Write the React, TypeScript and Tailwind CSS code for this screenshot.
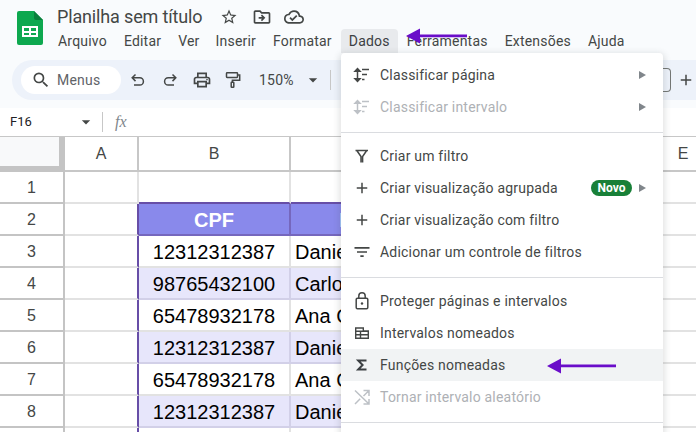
import React from "react";
import { MdStarBorder, MdOutlineDriveFileMove, MdOutlineCloudDone, MdOutlinePrint, MdSearch, MdFilterList, MdAdd, MdArrowDropDown } from "react-icons/md";

const SortIcon = ({ c = "#444746" }: { c?: string }) => (
  <svg width="18" height="18" viewBox="0 0 18 18" fill="none" stroke={c} strokeWidth="1.5">
    <path d="M4.5 3v12" />
    <path d="M2 5.2 4.5 2.6 7 5.2z" fill={c} />
    <path d="M2 12.8 4.5 15.4 7 12.8z" fill={c} />
    <path d="M9 3.5h7M9 8.5h5M9 13.5h2.5" />
  </svg>
);
const FilterIcon = () => (
  <svg width="18" height="18" viewBox="0 0 18 18" fill="none" stroke="#444746" strokeWidth="1.5">
    <path d="M2.5 3.5h12.5M3.8 3.5 8 9.5v6M13.7 3.5 9.6 9.5v6" />
  </svg>
);
const RangesIcon = () => (
  <svg width="16" height="16" viewBox="0 0 16 16" fill="none" stroke="#444746" strokeWidth="1.4">
    <path d="M1.7 3h7.6v3h5v7.3H1.7zM1.7 6.2h12.6M1.7 9.7h12.6M6.5 6.2v7.1" />
  </svg>
);
const SigmaIcon = () => (
  <svg width="14" height="14" viewBox="0 0 14 14" fill="none" stroke="#3c4043" strokeWidth="2">
    <path d="M11.5 2.5H3.2L7.6 7 3.2 11.5h8.3" />
  </svg>
);
const LockIcon = () => (
  <svg width="18" height="20" viewBox="0 0 18 20" fill="none" stroke="#444746" strokeWidth="1.5">
    <rect x="3.2" y="7.2" width="11.6" height="10.6" rx="1.2" />
    <path d="M5.8 7V5a3.2 3.2 0 0 1 6.4 0v2" />
    <circle cx="9" cy="12.5" r="1.2" fill="#444746" stroke="none" />
  </svg>
);
const ShuffleIcon = () => (
  <svg width="18" height="18" viewBox="0 0 18 18" fill="none" stroke="#bdc1c6" strokeWidth="1.5">
    <path d="M2 2.5 16 16M10.5 2.5H16V8M16 2.5 10.5 8M7.2 10.8 2 16M16 11V16H10.5" />
  </svg>
);
const UndoIcon = () => (
  <svg width="18" height="18" viewBox="0 0 18 18" fill="none" stroke="#444746" strokeWidth="1.5">
    <path d="M6.5 3.5 3.2 6.8l3.3 3.3M3.2 6.8h7.6a3.6 3.6 0 0 1 0 7.2H5" />
  </svg>
);
const RedoIcon = () => (
  <svg width="18" height="18" viewBox="0 0 18 18" fill="none" stroke="#444746" strokeWidth="1.5">
    <path d="M11.5 3.5l3.3 3.3-3.3 3.3M14.8 6.8H7.2a3.6 3.6 0 0 0 0 7.2H13" />
  </svg>
);
const PaintIcon = () => (
  <svg width="20" height="20" viewBox="0 0 20 20" fill="none" stroke="#444746" strokeWidth="1.5">
    <rect x="3.5" y="2.8" width="11" height="4.6" rx="0.6" />
    <path d="M14.5 5h2.2v5.2H9.4V12" />
    <rect x="8.2" y="12.2" width="2.6" height="5" rx="0.5" />
  </svg>
);
const Tri = () => <span className="ml-auto mr-[17px] h-0 w-0 border-y-[4px] border-l-[7px] border-y-transparent border-l-[#80868b]" />;

type Item = { label: string; icon: React.ReactNode; sub?: boolean; off?: boolean; hot?: boolean; badge?: boolean };
const groups: Item[][] = [
  [
    { label: "Classificar página", icon: <SortIcon />, sub: true },
    { label: "Classificar intervalo", icon: <SortIcon c="#bdc1c6" />, sub: true, off: true },
  ],
  [
    { label: "Criar um filtro", icon: <FilterIcon /> },
    { label: "Criar visualização agrupada", icon: <MdAdd size={18} color="#444746" />, sub: true, badge: true },
    { label: "Criar visualização com filtro", icon: <MdAdd size={18} color="#444746" /> },
    { label: "Adicionar um controle de filtros", icon: <MdFilterList size={20} color="#444746" /> },
  ],
  [
    { label: "Proteger páginas e intervalos", icon: <LockIcon /> },
    { label: "Intervalos nomeados", icon: <RangesIcon /> },
    { label: "Funções nomeadas", icon: <SigmaIcon />, hot: true },
    { label: "Tornar intervalo aleatório", icon: <ShuffleIcon />, off: true },
  ],
];

const rows = [
  ["12312312387", "Daniel Silva"],
  ["98765432100", "Carlos Souza"],
  ["65478932178", "Ana Costa"],
  ["12312312387", "Daniel Silva"],
  ["65478932178", "Ana Costa"],
  ["12312312387", "Daniel Silva"],
];

const Arrow = ({ cls, w }: { cls: string; w: number }) => (
  <svg className={cls} width={w} height="16" viewBox={`0 0 ${w} 16`}>
    <path d={`M0 8 14 0.5V6.6H${w}V9.2H14V15.5z`} fill="#6a0dc9" />
  </svg>
);

export default function App() {
  const menus = ["Arquivo", "Editar", "Ver", "Inserir", "Formatar", "Dados", "Ferramentas", "Extensões", "Ajuda"];
  const head = "box-border border-r-2 border-b-2 border-[#c7c7c7] flex items-center justify-center text-[16px] text-[#444746] font-['Liberation_Sans',sans-serif]";
  const rowNum = "box-border h-8 pt-px border-r-2 border-b-2 border-[#c4c4c4] flex items-center justify-center text-[16px] text-[#444746] font-['Liberation_Sans',sans-serif]";
  const cell = "box-border h-8 border-r-2 border-b-2 border-[#e2e2e2]";
  return (
    <div className="relative flex h-[432px] w-[696px] flex-col overflow-hidden bg-[#f9fbfd] font-['Roboto',sans-serif]">
      <div className="flex h-[60px] shrink-0">
        <div className="ml-[17px] mt-[11px] shrink-0">
          <svg width="26" height="34" viewBox="0 0 26 34">
            <path d="M2 0H17L26 9V32a2 2 0 0 1-2 2H2a2 2 0 0 1-2-2V2a2 2 0 0 1 2-2z" fill="#0da84f" />
            <path d="M17 0 26 9H19a2 2 0 0 1-2-2z" fill="#0a7f3c" />
            <path d="M5 15H21V26H5zM7 17V20H12V17zM14 17V20H19V17zM7 22V24H12V22zM14 22V24H19V22z" fill="#fff" fillRule="evenodd" />
          </svg>
        </div>
        <div className="ml-[6px] flex flex-col">
          <div className="flex h-[29px] items-center pl-2 pt-[4px]">
            <span className="w-[145px] whitespace-nowrap text-[18px] leading-6 tracking-[-0.15px] text-[#444746]">Planilha sem título</span>
            <span className="ml-[18px] flex items-center text-[#444746]">
              <MdStarBorder size={18} />
              <MdOutlineDriveFileMove size={20} className="ml-[14px]" />
              <MdOutlineCloudDone size={20} className="ml-[12px]" />
            </span>
          </div>
          <div className="flex h-6 items-center pl-px">
            {menus.map((m) => (
              <span key={m} className={`flex h-6 items-center rounded-t-[4px] px-2 text-[14px] tracking-[0.2px] ${m === "Ver" ? "mr-0" : "mr-px"} ${m === "Dados" ? "bg-[#e8eaed] text-[#3c4043]" : "text-[#444746]"}`}>{m}</span>
            ))}
          </div>
        </div>
      </div>

      <div className="ml-3 flex h-10 shrink-0 items-center rounded-l-[20px] bg-[#edf2fa] pl-[9px] text-[#444746]">
        <div className="flex h-7 w-[100px] items-center rounded-[14px] bg-white pl-[10px]">
          <MdSearch size={20} />
          <span className="ml-[6px] text-[14px] tracking-[0.2px] text-[#5f6368]">Menus</span>
        </div>
        <span className="ml-[8px]"><UndoIcon /></span>
        <span className="ml-[14px]"><RedoIcon /></span>
        <MdOutlinePrint size={20} className="ml-[13px]" />
        <span className="ml-[11px]"><PaintIcon /></span>
        <span className="ml-[16px] text-[14px] tracking-[0.2px]">150%</span>
        <MdArrowDropDown size={20} className="ml-[9px]" />
        <span className="ml-[7px] h-5 w-px bg-[#c7c7c7]" />
        <span className="ml-[332px] h-[24px] w-[8px] rounded-r-[4px] border border-l-0 border-[#747775]" />
        <MdAdd size={18} className="ml-[6px]" />
      </div>

      <div className="mt-2 flex h-[28px] shrink-0 items-center bg-white pl-[10px] text-[#444746]">
        <span className="w-[66px] text-[13px] text-[#202124]">F16</span>
        <MdArrowDropDown size={20} />
        <span className="ml-[6px] h-5 w-px bg-[#c7c7c7]" />
        <span className="ml-[12px] font-['Liberation_Serif',serif] text-[16px] italic text-[#80868b]">fx</span>
      </div>

      <div className="grid flex-1 grid-cols-[65px_74px_152px_154px_205px_68px] grid-rows-[35px] content-start border-t border-[#c7c7c7] bg-white">
        <div className="box-border border-r-[6px] border-b-[6px] border-[#c4c4c4] bg-[#f8f9fa]" />
        {["A", "B", "C", "D", "E"].map((c) => (
          <div key={c} className={head}>{c}</div>
        ))}

        <div className={rowNum}>1</div>
        <div className={cell} />
        <div className={`${cell} border-b-[#674ea7]`} />
        <div className={`${cell} border-b-[#674ea7]`} />
        <div className={cell} />
        <div className={cell} />

        <div className={rowNum}>2</div>
        <div className={`${cell} border-r-[#674ea7]`} />
        <div className="box-border flex h-8 items-center justify-center border-r-2 border-b-2 border-[#7567bd] bg-[#8989eb] pt-px font-['Liberation_Sans',sans-serif] text-[20px] font-bold text-white">CPF</div>
        <div className="box-border flex h-8 items-center justify-center border-r-2 border-b-2 border-[#7567bd] bg-[#8989eb] pt-px font-['Liberation_Sans',sans-serif] text-[20px] font-bold text-white">Nome</div>
        <div className={`${cell} border-l-2 border-l-[#674ea7]`} />
        <div className={cell} />

        {rows.map((r, i) => {
          const alt = i % 2 === 1;
          const data = `box-border flex h-8 items-center border-r-2 border-b-2 pt-px font-['Liberation_Sans',sans-serif] text-[20px] text-black overflow-hidden whitespace-nowrap ${alt ? "bg-[#e7e6fb] border-[#d2d0e8]" : "bg-white border-[#e2e2e2]"}`;
          return (
            <React.Fragment key={i}>
              <div className={rowNum}>{i + 3}</div>
              <div className={`${cell} border-r-[#674ea7]`} />
              <div className={`${data} justify-center`}>{r[0]}</div>
              <div className={`${data} pl-[4px]`}>{r[1]}</div>
              <div className={cell} />
              <div className={cell} />
            </React.Fragment>
          );
        })}
        <div className={rowNum} />
        <div className={`${cell} border-r-[#674ea7]`} />
        <div className={cell} />
        <div className={cell} />
        <div className={cell} />
        <div className={cell} />
      </div>

      <div className="absolute left-[341px] top-[53px] h-[400px] w-[322px] rounded-[4px] bg-white pt-[6px] shadow-[0_2px_6px_2px_rgba(60,64,67,0.15)]">
        {groups.map((g, gi) => (
          <div key={gi}>
            {g.map((it) => (
              <div key={it.label} className={`flex h-8 items-center ${it.hot ? "bg-[#f1f3f4]" : ""}`}>
                <span className="ml-[11px] flex w-5 justify-center">{it.icon}</span>
                <span className={`ml-2 text-[14px] tracking-[0.2px] ${it.off ? "text-[#aeb1b5]" : "text-[#444746]"}`}>{it.label}</span>
                {it.badge && <span className="absolute left-[250px] flex h-4 w-[41px] items-center justify-center rounded-full bg-[#188038] text-[12px] font-bold text-white">Novo</span>}
                {it.sub && <Tri />}
              </div>
            ))}
            <div className="mb-[7px] mt-[9px] h-px bg-[#dadce0]" />
          </div>
        ))}
      </div>

      <Arrow cls="absolute left-[406px] top-[28px]" w={61} />
      <Arrow cls="absolute left-[547px] top-[358px]" w={69} />
    </div>
  );
}
